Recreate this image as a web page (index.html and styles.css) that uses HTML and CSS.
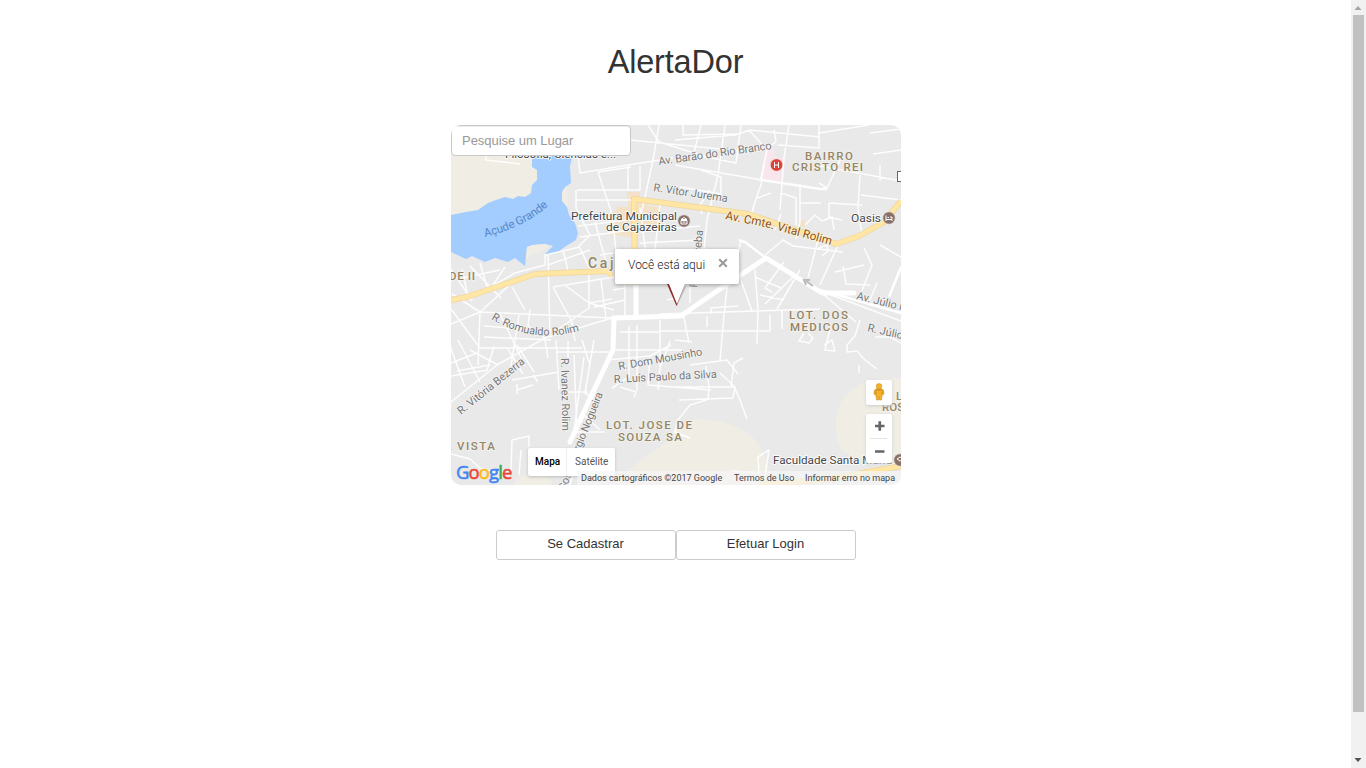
FILE: index.html
```html
<!DOCTYPE html>
<html lang="pt-BR">
<head>
<meta charset="utf-8">
<title>AlertaDor</title>
<link rel="stylesheet" href="styles.css">
</head>
<body>
<div class="page">
<main class="content">
  <h1 class="title">AlertaDor</h1>
  <section class="map">
    <svg class="map-canvas" viewBox="451 125 450 360" width="450" height="360">
      <rect class="land" x="451" y="125" width="450" height="360"/>
      <g class="sand">
        <path d="M451 125H540V182L531 193L525 197L505 197L488 203L478 210L451 216Z"/>
        <path d="M562 183L566 187L568 208L562 202L561 195L565 187Z"/>
        <path d="M615 485Q637 460 664 444Q676 419 701 419Q730 420 751 436Q765 449 770 473L765 485Z"/>
        <path d="M901 378Q858 376 842 400Q830 421 840 448Q855 463 901 466Z"/>
        <path d="M517 476L545 472L553 485H514Z"/>
      </g>
      <path class="water" d="M532 150H570L572 158L570 166L571 183L565 187L562 192L562 201L567 207L569 215L575 223L578 233L576 240L566 246L558 252L547 255L545 254L553 246L545 244L533 245L527 247L525 266L515 258L508 262L495 258L485 262L472 256L466 259L451 252V215L466 212L478 210L488 203L496 200L505 197L513 199L518 196L525 197L531 193L532 185L537 180L537 170L532 167Z"/>
      <path class="sand" d="M527 247L533 245L546 244L548 247L540 252L532 254L526 259Z"/>
      <path class="hospital" d="M767 148H774V157L784 158L783 181L762 180Z"/>
      <g class="downtown"><path d="M627 192H640V203L660 208L665 230H640L637 238L615 235L612 239L609 225L617 207H628ZM800 220H805V227H798Z"/></g>
      <g class="roads">
        <path d="M486 155V160L520 164M578 155L580 173L628 165L673 158M577 190H637M576 200H633M576 190V208L590 235L579 246L590 269M598 172L612 214L618 270M628 165V190H640V166M659 125L653 160L640 220M598 172L631 167M579 125L597 143L630 140L622 125M597 143L600 155M570 139L629 132M630 140L751 152M648 125L659 142L707 157M701 125L693 157M683 125V135L738 134"/>
        <path d="M578 226L628 220M580 237L632 230M595 222L606 262M640 208L648 270M660 205L655 250M640 232L700 226M640 243L700 240M600 255L632 250"/>
        <path d="M741 125L736 163L696 155M725 125L718 175L707 220L702 270M675 165L762 180M701 170L721 177V194L680 187M710 190L700 205L702 214M749 130L767 150L760 182M774 130L776 142L767 148L761 182M789 125L784 158L780 210M675 140L735 135L750 130L820 137M778 145L819 148V125M819 133L869 125M870 133L901 129M873 154L901 150M820 166L901 181M819 183L827 188L843 154M880 165V181M860 175L858 208L862 235M861 195L901 200M829 203L862 205M829 203V217L842 220M800 184V222L796 239M762 182L755 202L751 216M757 198L771 193M781 193L796 198V225M781 214L775 230M799 203L821 203M805 225L815 215L822 221L832 217L834 230"/>
        <path class="road-wide" d="M762 180L820 189H827"/>
        <path d="M741 240L737 260M765 255L783 240L793 246L843 252M739 275L752 311M755 270L758 310M755 277L781 288M760 295L784 300M784 262L765 288L772 292M800 270L777 309M793 277L765 304M818 240L808 278M816 249L827 245L828 251L822 256M838 245L820 285M835 272L864 265M843 266L846 284L870 285M864 248L872 265L861 293M877 283L869 302M880 245L901 257M823 294L856 322M831 295L901 321"/>
        <path d="M660 314L820 309M690 283V303M661 331H770V315M667 300L677 298M683 313L689 343M707 316V327M729 270L724 315L720 361M710 308L738 306M711 309V314M758 311L757 344M782 311V329M804 333L799 341L809 343L813 338L808 333M830 329L825 350L835 351L832 340L824 345M860 320L855 336L847 345V352L857 351L865 360L877 369M875 337H890L901 343M690 365L727 360L738 374M675 340L692 342"/>
        <path d="M451 269L472 301M462 269L467 292M470 266L501 298M480 263L488 290M493 285L505 267M462 278L500 270M452 294L480 312L612 318M468 300L515 273L545 265V255L580 247M480 312L515 280M512 287L525 310M548 254L550 335M563 250L568 271M548 265L590 250M553 287L572 322L575 341M553 287L614 277M566 286L589 303L614 310M589 270V308L554 332M589 303L612 299M451 324L480 312L478 365M451 309L480 348H582M500 314L525 366M519 315L510 372M530 310L528 326L545 338M484 326L525 329M484 337L551 340M494 346L487 370M451 363L477 353M451 376L488 370M612 318L545 338L497 365L451 402"/>
        <path d="M450 346L465 387M458 340L480 382M457 371L490 365M470 350L498 365M508 349L523 374M517 345L534 372M545 340L548 358M556 340L559 390M556 352H609M568 341V360M582 340L590 365M574 355L577 432M584 357L574 430M594 340L585 393L599 402M512 380L559 372M517 384V394M517 390L533 385M533 375L538 382M564 392L588 392M574 432H605"/>
        <path d="M616 350H682M607 360L650 356L671 345M629 326V377L612 388M637 325V391M650 357L648 385L711 390M670 341L660 368L658 390M660 320V370M620 332H661M675 387L735 387L733 398L679 400M706 366L709 387L708 400M731 387L734 363L743 358M720 373L734 386L740 400L747 419M709 399L690 405L677 421L675 432L690 438M620 387L636 392L634 397M583 414L600 430M512 440L529 436V447M512 440L511 470L497 473L480 468L470 459L451 454M521 450L519 475M765 475L769 450L758 457L759 473L732 471M799 473L805 480M859 365V373M868 444L874 440L890 444M576 465L570 485"/>
      </g>
      <path class="road-medium" d="M601 280L606 318M625 278V315M613 290L625 288M594 307L625 300"/>
      <path class="avenue-side" d="M766 258L745 242L739 240M820 290L901 313M901 267L889 297"/>
      <path class="avenue" d="M636 285V316M613 318L681 316L698 304L766 258L822 293L854 293M614 318L613 350L593 392L570 442"/>
      <g class="highway-edge"><path d="M635 285L634 199L703 208L748 214L836 244L859 236L884 222L901 201M451 300L467 297L535 274L608 271L612 276M760 485L830 479L901 466"/></g>
      <g class="highway"><path d="M635 285L634 199L703 208L748 214L836 244L859 236L884 222L901 201M451 300L467 297L535 274L608 271L612 276M760 485L830 479L901 466"/></g>
      <path class="road-arrow" d="M813 286L806 281M810 280L804 280L806 285"/>
      <g class="street-label">
        <path id="reservoir" d="M485 237Q526 227 550 204" fill="none"/>
        <text class="water-label"><textPath href="#reservoir" textLength="71">Açude Grande</textPath></text>
        <text transform="translate(659 165) rotate(-8)" textLength="114">Av. Barão do Rio Branco</text>
        <text transform="translate(653 191) rotate(8.5)" textLength="75">R. Vítor Jurema</text>
        <path id="vital" d="M725 219L765 227L831 245" fill="none"/>
        <text class="highway-label"><textPath href="#vital" textLength="109">Av. Cmte. Vital Rolim</textPath></text>
        <path id="romualdo" d="M491 319Q534 345 582 330" fill="none"/>
        <text><textPath href="#romualdo" textLength="92">R. Romualdo Rolim</textPath></text>
        <text transform="translate(619 370) rotate(-10)" textLength="85">R. Dom Mousinho</text>
        <text transform="translate(614 383) rotate(-3)" textLength="103">R. Luís Paulo da Silva</text>
        <text transform="translate(461 415) rotate(-39)" textLength="83">R. Vitória Bezerra</text>
        <text transform="translate(561 358) rotate(89)" textLength="73">R. Ivanez Rolim</text>
        <text transform="translate(578 456) rotate(-68)" textLength="67">érgio Nogueira</text>
        <text transform="translate(565 491) rotate(-68)">Sosc</text>
        <text transform="translate(697 288) rotate(-84)" textLength="58">R. Pereceba</text>
        <text transform="translate(856 299) rotate(14)">Av. Júlio Mª</text>
        <text transform="translate(867 331) rotate(13)">R. Júlio M.</text>
      </g>
      <g class="district">
        <text x="805" y="160" textLength="48">BAIRRO</text><text x="792" y="171" textLength="71">CRISTO REI</text>
        <text x="789" y="319" textLength="59">LOT. DOS</text><text x="790" y="331" textLength="58">MEDICOS</text>
        <text x="606" y="429" textLength="86">LOT. JOSE DE</text><text x="618" y="441" textLength="64">SOUZA SA</text>
        <text x="449" y="280" textLength="26">DE II</text><text x="449" y="450">.</text><text x="457" y="450" textLength="38">VISTA</text>
        <text x="896" y="400">LOT.</text><text x="882" y="411">ROSA</text>
        <text class="city" x="588" y="268">Cajazeiras</text>
      </g>
      <g class="place-label">
        <text x="505" y="158" textLength="111">Filosofia, Ciências e...</text>
        <text x="571" y="219.5" textLength="106" lengthAdjust="spacingAndGlyphs">Prefeitura Municipal</text><text x="606" y="231" textLength="71" lengthAdjust="spacingAndGlyphs">de Cajazeiras</text>
        <text x="851" y="222" textLength="30" lengthAdjust="spacingAndGlyphs">Oasis</text><text x="773" y="463.5" textLength="119" lengthAdjust="spacingAndGlyphs">Faculdade Santa Maria</text>
      </g>
      <g class="place-pin">
        <circle cx="684" cy="221" r="6.2"/><circle cx="889" cy="218" r="6.2"/><circle cx="900" cy="460" r="6.2"/><circle class="hospital-pin" cx="776.5" cy="165" r="6.2"/>
      </g>
      <path class="pin-glyph" d="M681 219.5L684 217.5L687 219.5ZM681 220.5H687V224H681ZM682.5 222H685.5M886 215.5V221M886 219.5H892V221M887.5 217.5H889M890 217H892V219M774.5 162V168M778.5 162V168M774.5 165H778.5M897 459L900 457L904 459L900 461Z"/>
      <rect class="map-square" x="897.5" y="171.5" width="7" height="10"/>
    </svg>
    <input class="search" type="text" placeholder="Pesquise um Lugar" aria-label="Pesquise um Lugar">
    <div class="info"><span>Você está aqui</span>
      <svg width="10" height="10" viewBox="0 0 10 10"><path d="M1.2 1.2L8.8 8.8M8.8 1.2L1.2 8.8"/></svg>
    </div>
    <svg class="info-tail" width="26" height="24" viewBox="0 0 26 24"><path class="tail-shadow" d="M5 1L13 22L23 1"/><path class="tail-pin" d="M3 0L12.5 22L21 0"/><path class="tail-fill" d="M5 0L13 20L21 0"/></svg>
    <div class="pegman"><svg width="12" height="19" viewBox="0 0 12 19"><path d="M3.2 6L1.5 7L.8 11L2.7 12L3.5 17H5.5L6 13.5L6.5 17H8.5L9.2 12L11.1 11L10.5 7L8.8 6Z"/><circle cx="6" cy="3.3" r="2.8"/><path class="pegman-shade" d="M3.5 6.2Q6 8.5 8.5 6.2M3 7V11.5M9 7V11.5"/></svg></div>
    <div class="zoom"><svg width="26" height="49" viewBox="0 0 26 49"><path class="zoom-line" d="M4 24.5H21"/><path class="zoom-sign" d="M9 12H18.5M13.75 7.25V16.75M9 37.5H18.5"/></svg></div>
    <div class="map-type"><span class="map-active">Mapa</span><span class="satellite">Satélite</span></div>
    <div class="google" aria-label="Google"><span class="g-blue">G</span><span class="g-red">o</span><span class="g-yellow">o</span><span class="g-blue">g</span><span class="g-green">l</span><span class="g-red">e</span></div>
    <div class="legal"><span class="copyright">Dados cartográficos ©2017 Google</span><span class="terms">Termos de Uso</span><span class="report">Informar erro no mapa</span></div>
  </section>
  <div class="actions"><button class="action">Se Cadastrar</button><button class="action">Efetuar Login</button></div>
</main>
<aside class="scrollbar"><svg class="arrow" width="15" height="15" viewBox="0 0 15 15"><path class="arrow-up" d="M3.5 10H10.5L7 6Z"/></svg><div class="thumb"></div><svg class="arrow" width="15" height="15" viewBox="0 0 15 15"><path class="arrow-down" d="M3.5 5H10.5L7 9Z"/></svg></aside>
</div>
</body>
</html>
```
FILE: styles.css
```css
* { box-sizing: border-box; }
body { margin: 0; background: #fff; color: #333; font-family: "Liberation Sans", Arial, sans-serif; overflow: hidden; }
.page { display: flex; height: 768px; }
.content { flex: 1; display: flex; flex-direction: column; align-items: center; padding-top: 43px; }
.title { margin: 0; height: 82px; font-size: 32.5px; line-height: 38px; font-weight: 400; letter-spacing: -.18px; }
.map { position: relative; left: .5px; width: 450px; height: 360px; flex-shrink: 0; border-radius: 10px; overflow: hidden; font-family: Roboto, sans-serif; }
.map-canvas { display: block; }
.land { fill: #e9e9e9; }
.sand { fill: #efede4; }
.water { fill: #a3ccff; }
.hospital { fill: #f9e6ec; }
.downtown { fill: #f3e2c8; }
.roads { fill: none; stroke: #fff; stroke-width: 1.5; stroke-opacity: .9; stroke-linejoin: round; }
.road-wide { stroke-width: 2.5; }
.road-medium { fill: none; stroke: #fff; stroke-width: 1.3; }
.avenue { fill: none; stroke: #fff; stroke-width: 5; stroke-linecap: round; stroke-linejoin: round; }
.avenue-side { fill: none; stroke: #fff; stroke-width: 2.5; }
.highway-edge { fill: none; stroke: #eed69b; stroke-width: 6; stroke-linejoin: round; }
.highway { fill: none; stroke: #ffe6a5; stroke-width: 4.5; stroke-linejoin: round; }
.road-arrow { fill: none; stroke: #bbb; stroke-width: 2; }
.street-label { font-size: 11px; fill: #777; stroke: #f4f4f4; stroke-width: 1.5px; paint-order: stroke; }
.street-label path { stroke: none; }
.water-label { fill: #5688c5; stroke: none; font-size: 11.5px; }
.highway-label { fill: #865019; stroke: #fff2d0; font-size: 11.7px; }
.district { font-size: 11.5px; font-weight: 500; fill: #928568; stroke: #f5f3ed; stroke-width: 1.5px; paint-order: stroke; }
.city { font-size: 14px; letter-spacing: 2.6px; }
.place-label { font-size: 11.7px; fill: #444; stroke: #fff; stroke-width: 1.5px; paint-order: stroke; }
.place-pin { fill: #897068; stroke: #eee; stroke-width: .6; }
.hospital-pin { fill: #dc4437; }
.pin-glyph { stroke: #fff; stroke-width: 1; fill: none; }
.map-square { fill: #fff; stroke: #666; }
.search { position: absolute; left: 0; top: 0; width: 180px; height: 31px; border: 1px solid #c7c7c7; border-radius: 4px; padding: 0 10px; background: #fff; font: 13px "Liberation Sans", Arial, sans-serif; letter-spacing: -.04px; box-shadow: inset 0 1px 1px #eee; }
.search::placeholder { color: #999; opacity: 1; }
.info { position: absolute; left: 164px; top: 124px; width: 124px; height: 35px; display: flex; align-items: center; padding-left: 13px; gap: 12px; background: #fff; border-radius: 2px; box-shadow: 0 1px 4px #999; font-size: 12px; font-weight: 300; color: #222; z-index: 1; }
.info span { width: 78px; margin-bottom: 4px; white-space: nowrap; }
.info svg { margin-bottom: 7px; fill: none; stroke: #999; stroke-width: 2; }
.info-tail { position: absolute; left: 213px; top: 158.5px; z-index: 2; overflow: visible; }
.tail-shadow { fill: #bbb; }
.tail-pin { fill: #8d2929; }
.tail-fill { fill: #fff; }
.pegman, .zoom { position: absolute; left: 415px; width: 26px; background: #fff; border-radius: 2px; box-shadow: 0 1px 3px #ccc; }
.pegman { top: 255px; height: 25px; display: flex; align-items: center; justify-content: center; fill: #f4b229; stroke: #c98723; stroke-width: .5; }
.pegman-shade { fill: none; stroke: #b97721; stroke-width: .7; }
.zoom { top: 289px; height: 49px; }
.zoom-line { stroke: #e4e4e4; }
.zoom-sign { stroke: #666; stroke-width: 2.7; }
.map-type { position: absolute; left: 77px; top: 323px; height: 28px; display: flex; background: #fff; border-radius: 2px; box-shadow: 0 1px 3px #bbb; font-size: 10px; line-height: 27px; z-index: 2; }
.map-active { width: 39px; padding-left: 7px; border-right: 1px solid #eee; color: #000; font-weight: 500; }
.satellite { width: 48px; padding-left: 8px; color: #565656; }
.google { position: absolute; left: 5px; top: 335px; display: flex; font: 500 18.5px/24px "Open Sans", sans-serif; letter-spacing: -.9px; -webkit-text-stroke: .6px currentColor; text-shadow: 0 0 1px #fff; }
.g-blue { color: #4384ef; }
.g-red { color: #e94639; }
.g-yellow { color: #f9bb15; }
.g-green { color: #34a653; }
.legal { position: absolute; right: 0; bottom: 0; height: 14px; width: 324px; padding-left: 4px; display: flex; background: rgba(245,245,245,.72); color: #444; font-size: 9px; line-height: 14px; white-space: nowrap; z-index: 3; }
.copyright { width: 153px; }
.terms { width: 71px; }
.actions { display: flex; margin-top: 45px; position: relative; left: .5px; }
.action { width: 180px; height: 30px; border: 1px solid #ccc; border-radius: 3px; padding: 0 1px 3px 0; background: #fff; color: #333; font: 13px "Liberation Sans", Arial, sans-serif; }
.scrollbar { width: 15px; display: flex; flex-direction: column; background: #f1f1f1; }
.arrow { display: block; flex: none; }
.thumb { width: 11px; height: 697px; margin-left: 2px; margin-bottom: 41px; background: #c1c1c1; }
.arrow-up { fill: #a3a3a3; }
.arrow-down { fill: #505050; }
```
